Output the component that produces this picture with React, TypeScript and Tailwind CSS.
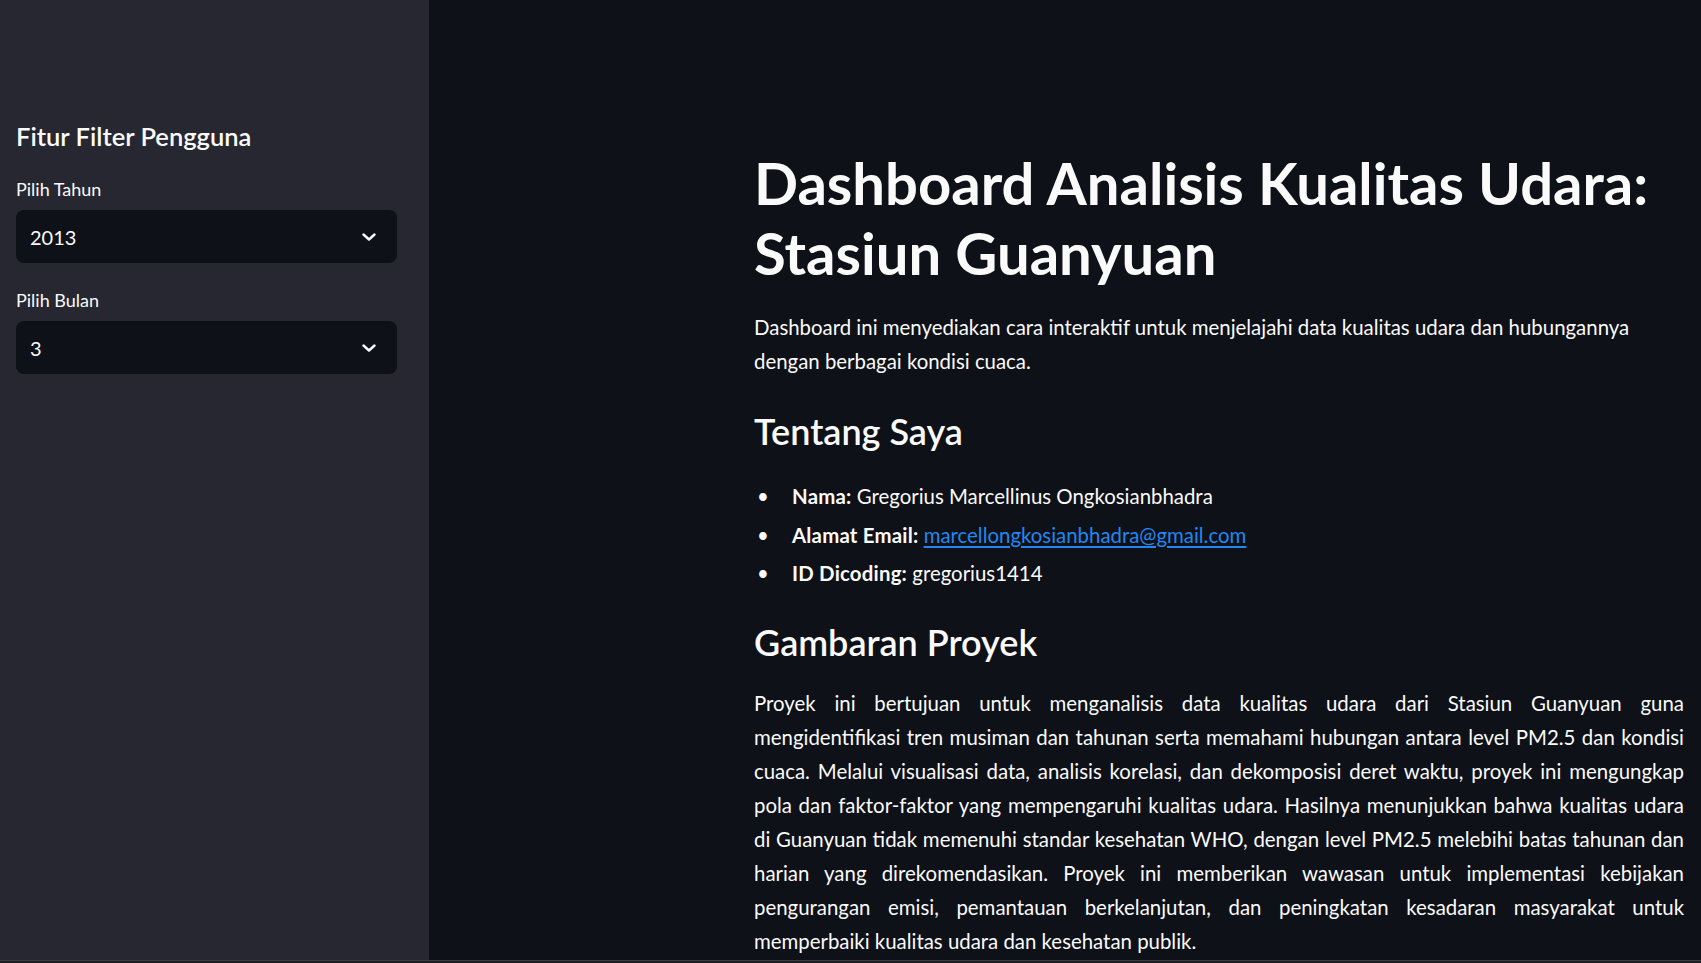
import { ReactNode } from "react"

const font = "font-['Lato','Noto_Sans',sans-serif]"

function Chevron() {
  return (
    <svg width="14" height="8" viewBox="0 0 14 8" fill="none">
      <path d="M1.5 1.5 7 6.5 12.5 1.5" stroke="#fafafa" strokeWidth="2.4" strokeLinecap="round" strokeLinejoin="round" />
    </svg>
  )
}

function SelectBox({ label, value }: { label: string; value: string }) {
  return (
    <div className="flex flex-col gap-[9px]">
      <label className="text-[18px] leading-[24px] text-[#fafafa]">{label}</label>
      <div className="flex h-[53px] items-center justify-between rounded-[8px] bg-[#0e1117] pl-[14px] pr-[21px]">
        <span className="text-[20px] leading-[24px] text-[#fafafa]">{value}</span>
        <Chevron />
      </div>
    </div>
  )
}

function Item({ label, children }: { label: string; children: ReactNode }) {
  return (
    <li className="flex items-start">
      <span className="w-[38px] shrink-0 pl-[3px] text-[20.4px] leading-[34px]">•</span>
      <span>
        <b className="font-bold tracking-[0.2px]">{label}</b> {children}
      </span>
    </li>
  )
}

export default function App() {
  return (
    <div className={`flex h-screen flex-col overflow-hidden bg-[#0e1117] text-[#fafafa] ${font}`}>
      <div className="flex min-h-0 flex-1">
        <aside className="w-[429px] shrink-0 bg-[#262730] px-[16px] pt-[121px] pr-[32px]">
          <h2 className="mb-[26px] text-[25.5px] font-semibold leading-[30px]">Fitur Filter Pengguna</h2>
          <div className="flex flex-col gap-[25px]">
            <SelectBox label="Pilih Tahun" value="2013" />
            <SelectBox label="Pilih Bulan" value="3" />
          </div>
        </aside>

        <main className="min-w-0 flex-1 pl-[325px] pr-[17px] pt-[148px]">
          <h1 className="text-[58px] font-bold leading-[70px]">
            Dashboard Analisis Kualitas Udara: Stasiun Guanyuan
          </h1>
          <p className="mt-[22px] text-[20.4px] leading-[34px]">
            Dashboard ini menyediakan cara interaktif untuk menjelajahi data kualitas udara dan hubungannya dengan
            berbagai kondisi cuaca.
          </p>

          <h3 className="mt-[32px] text-[36px] font-semibold leading-[43px]">Tentang Saya</h3>
          <ul className="mt-[26px] flex flex-col gap-[4.5px] text-[20.4px] leading-[34px]">
            <Item label="Nama:">Gregorius Marcellinus Ongkosianbhadra</Item>
            <Item label="Alamat Email:">
              <a href="#" className="text-[#2088f0] underline underline-offset-[3px]">
                marcellongkosianbhadra@gmail.com
              </a>
            </Item>
            <Item label="ID Dicoding:">gregorius1414</Item>
          </ul>

          <h3 className="mt-[31px] text-[36px] font-semibold leading-[43px]">Gambaran Proyek</h3>
          <p className="mt-[22px] text-justify text-[20.4px] leading-[34px]">
            Proyek ini bertujuan untuk menganalisis data kualitas udara dari Stasiun Guanyuan guna mengidentifikasi tren
            musiman dan tahunan serta memahami hubungan antara level PM2.5 dan kondisi cuaca. Melalui visualisasi data,
            analisis korelasi, dan dekomposisi deret waktu, proyek ini mengungkap pola dan faktor-faktor yang
            mempengaruhi kualitas udara. Hasilnya menunjukkan bahwa kualitas udara di Guanyuan tidak memenuhi standar
            kesehatan WHO, dengan level PM2.5 melebihi batas tahunan dan harian yang direkomendasikan. Proyek ini
            memberikan wawasan untuk implementasi kebijakan pengurangan emisi, pemantauan berkelanjutan, dan peningkatan
            kesadaran masyarakat untuk memperbaiki kualitas udara dan kesehatan publik.
          </p>
        </main>
      </div>
      <div className="h-[3px] shrink-0 border-t border-[#3b3d45] bg-[#1c1e24]" />
    </div>
  )
}
